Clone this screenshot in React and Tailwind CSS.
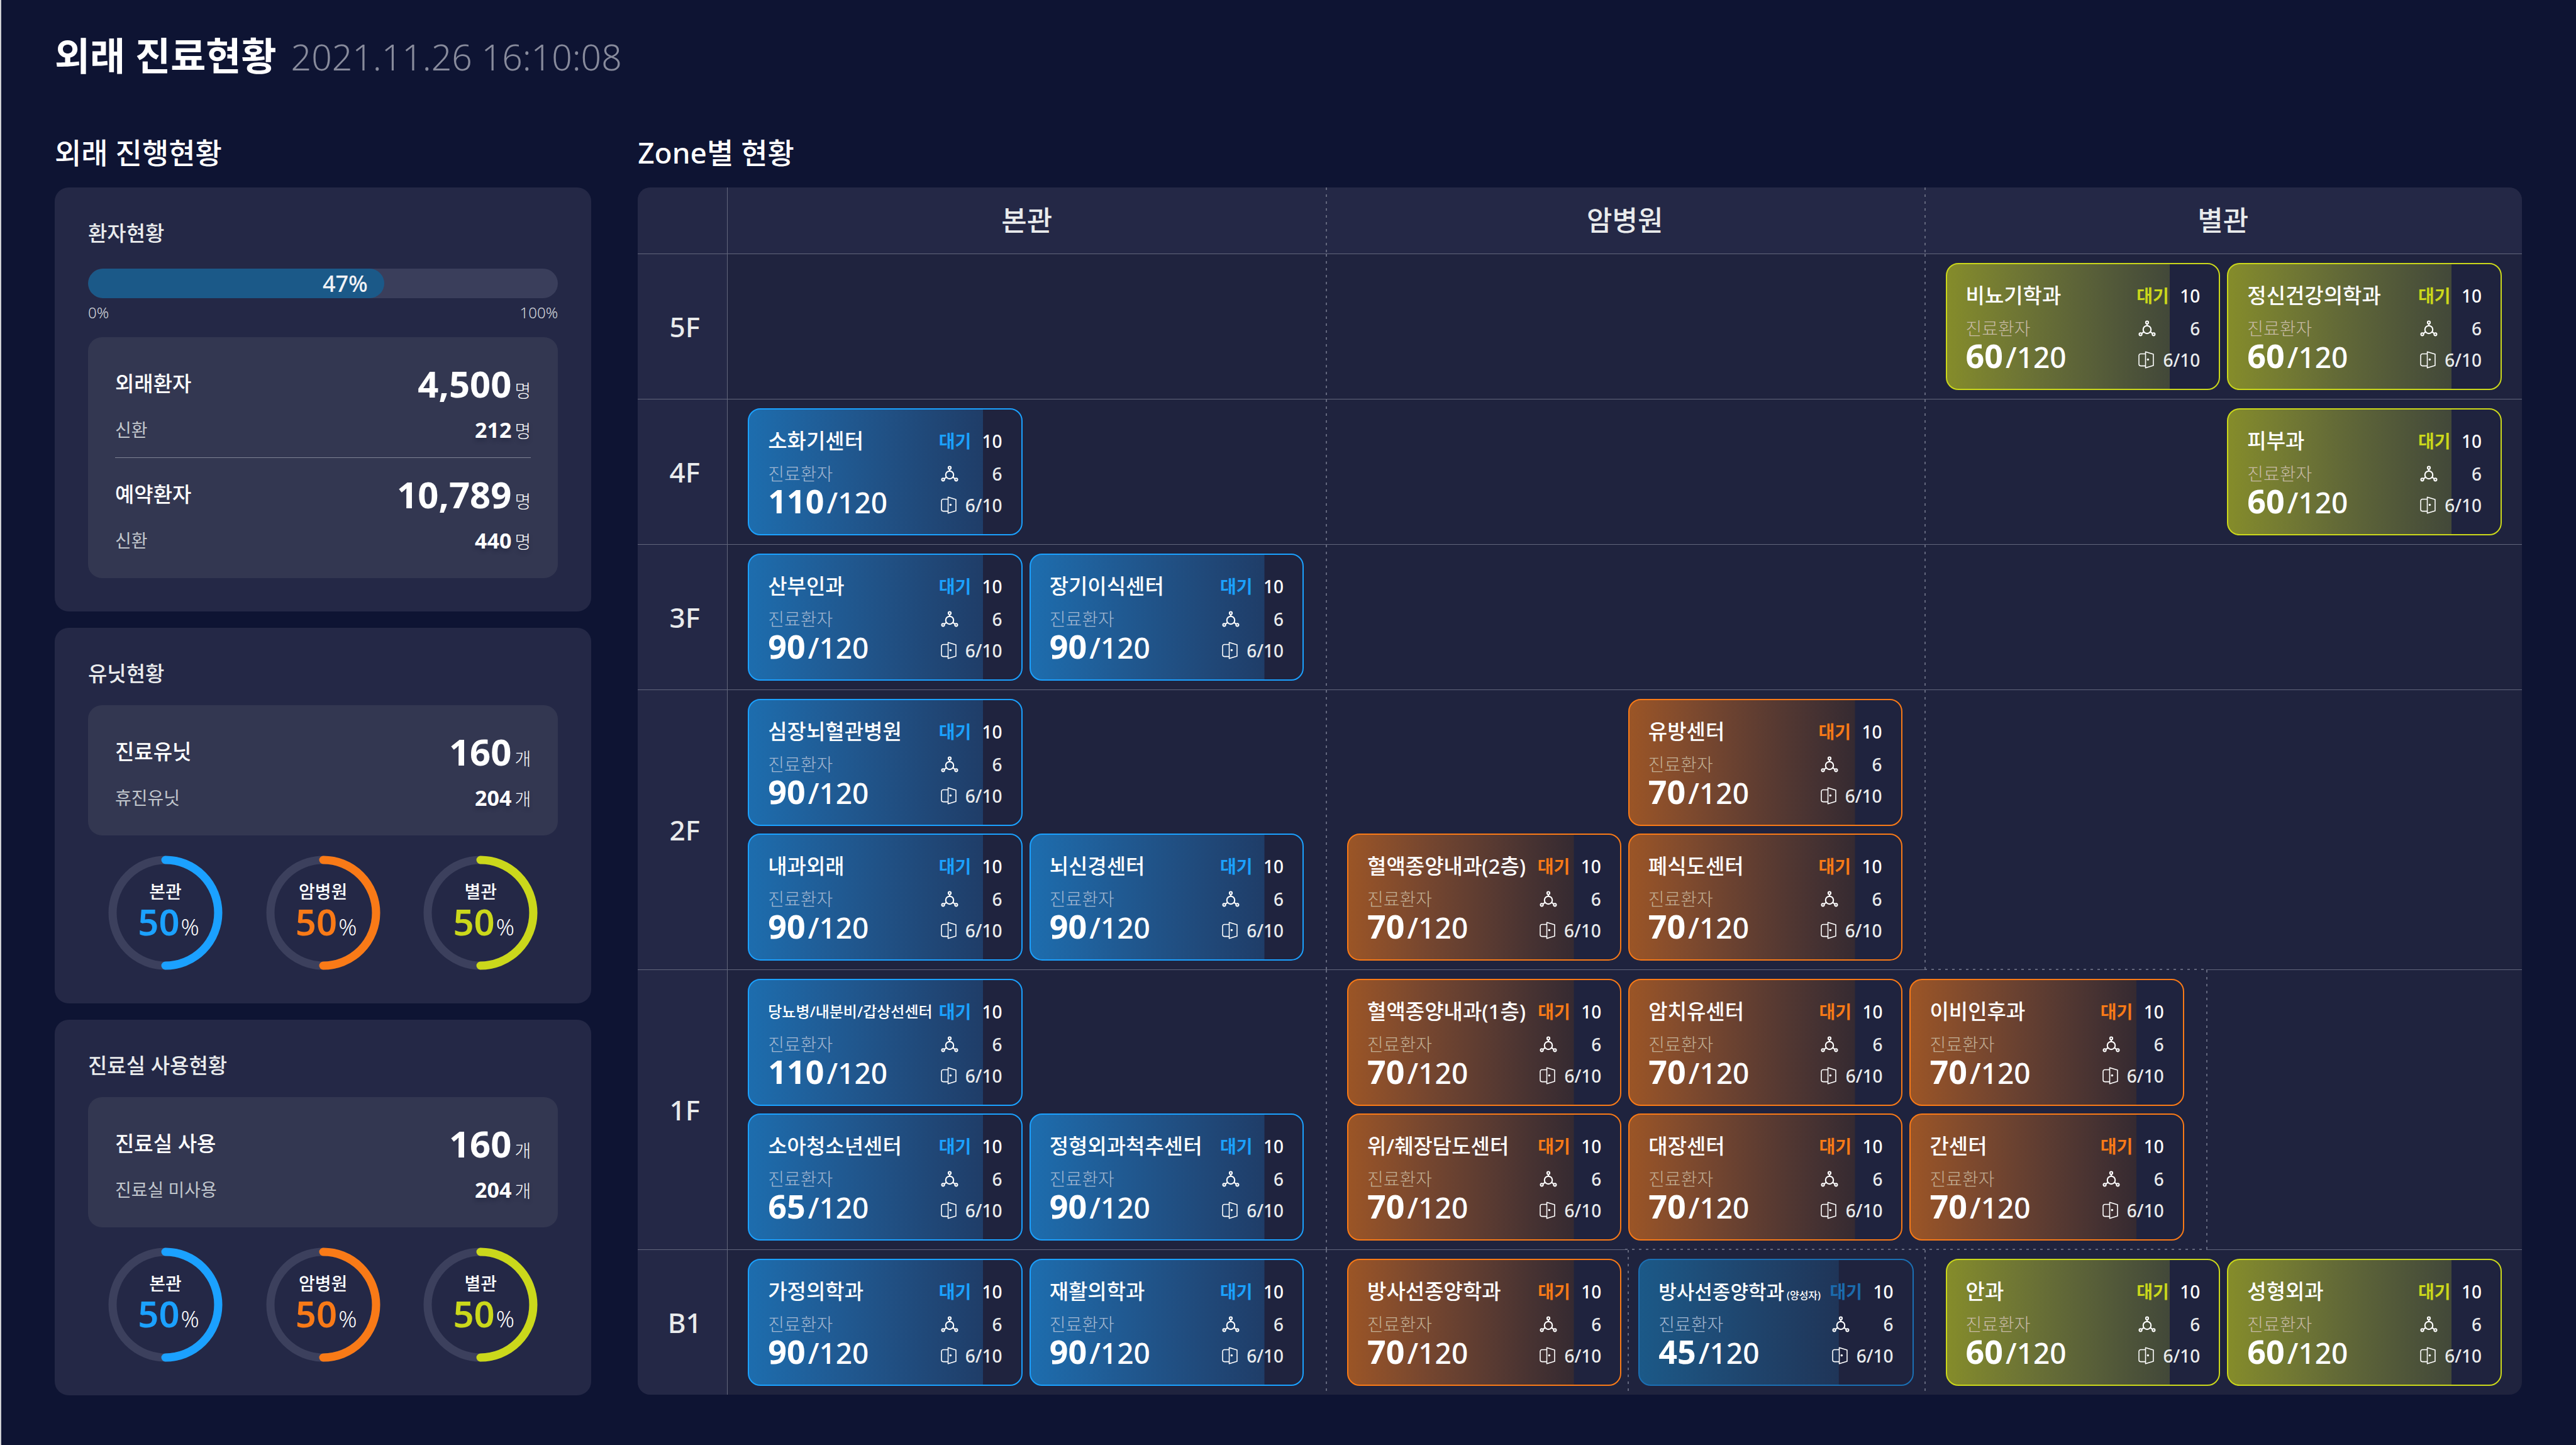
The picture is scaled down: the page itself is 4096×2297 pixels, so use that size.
const font = 'font-["Noto_Sans","Noto_Sans_CJK_KR",sans-serif]';

const dashLeft =
  '[background:repeating-linear-gradient(to_bottom,#62667c_0_4px,transparent_4px_11px)_left_top/2px_100%_no-repeat]';

const dashLeftAndBottom =
  '[background:repeating-linear-gradient(to_bottom,#62667c_0_4px,transparent_4px_11px)_left_top/2px_100%_no-repeat,repeating-linear-gradient(to_right,#62667c_0_4px,transparent_4px_11px)_left_bottom/100%_2px_no-repeat]';

/* Cancer-center block on 1F: the first third keeps a solid floor line, the rest is dashed. */
const dashCancer1F =
  '[background:repeating-linear-gradient(to_bottom,#62667c_0_4px,transparent_4px_11px)_left_top/2px_100%_no-repeat,linear-gradient(#62667c,#62667c)_left_bottom/34%_1px_no-repeat,repeating-linear-gradient(to_right,#62667c_0_4px,transparent_4px_11px)_right_bottom/66%_2px_no-repeat]';

const tones = {
  blue: {
    card: 'border-[#1ba1ff] from-[#1d6dae] to-[#1f3d68] bg-[length:86%_100%]',
    wait: 'text-[#1ba1ff]',
    sub: 'text-[#a5b9d3]',
  },
  dim: {
    card: 'border-[#1b6fb3] from-[#1b5988] to-[#1f3558] bg-[length:73%_100%]',
    wait: 'text-[#1b6bad]',
    sub: 'text-[#a5b9d3]',
  },
  orange: {
    card: 'border-[#f97a17] from-[#9b5526] to-[#352a31] bg-[length:83%_100%]',
    wait: 'text-[#f97a17]',
    sub: 'text-[#c4b095]',
  },
  green: {
    card: 'border-[#cbd81b] from-[#858c2a] to-[#424839] bg-[length:82%_100%]',
    wait: 'text-[#cbd81b]',
    sub: 'text-[#c8bba6]',
  },
};

function StaffIcon() {
  return (
    <svg viewBox="0 0 160 150" className="h-[26px] w-7" fill="none" stroke="#fff" strokeWidth="12" aria-label="의료진" role="img">
      <circle cx="80" cy="86" r="36" />
      <circle cx="80" cy="21" r="12" />
      <circle cx="20" cy="129" r="12" />
      <circle cx="140" cy="129" r="12" />
      <path d="M80 33V50M50 107L31 121M110 107L129 121" />
    </svg>
  );
}

function DoorIcon() {
  return (
    <svg viewBox="0 0 143 158" className="h-7 w-[25px]" fill="none" stroke="#fff" strokeWidth="9" strokeLinejoin="round" aria-label="진료실" role="img">
      <path d="M66 6L137 27V130L66 152Z" />
      <path d="M66 25H22A16 16 0 0 0 6 41V118A16 16 0 0 0 22 134H66" />
      <circle cx="88" cy="76" r="10" fill="#fff" stroke="none" />
    </svg>
  );
}

function Clinic({ tone, name, note, count, size = 'text-[33px]' }) {
  const t = tones[tone];
  return (
    <article className={`flex h-[202px] min-w-0 justify-between rounded-[20px] border-2 bg-linear-to-r bg-no-repeat px-[30px] pt-6 ${t.card}`}>
      <div className="whitespace-nowrap">
        <h3 className={`h-[52px] leading-[52px] font-medium text-white ${size}`}>
          {name}
          {note && <small className="ml-1 text-[16px] leading-none">{note}</small>}
        </h3>
        <p className={`text-[28px] leading-[52px] font-light ${t.sub}`}>진료환자</p>
        <p className="text-[46px] leading-[34px] font-medium text-white">
          <strong className="mr-1 text-[52px] font-bold">{count}</strong>
          /120
        </p>
      </div>
      <dl className="w-[101px] shrink-0 text-[28px] leading-[52px] font-medium text-[#e9ebec]">
        <div className="flex justify-between">
          <dt className={`font-bold ${t.wait}`}>대기</dt>
          <dd className="text-white">10</dd>
        </div>
        <div className="flex items-center justify-between">
          <dt className="pl-[3px]"><StaffIcon /></dt>
          <dd>6</dd>
        </div>
        <div className="flex items-center justify-between leading-[48px]">
          <dt className="pl-[3px]"><DoorIcon /></dt>
          <dd>6/10</dd>
        </div>
      </dl>
    </article>
  );
}

function Cards({ tone, items, cols = 'grid-cols-2' }) {
  return (
    <div className={`grid gap-x-[11px] gap-y-3 ${cols}`}>
      {items.map((it, i) => (it ? <Clinic key={i} tone={tone} name={it[0]} count={it[1]} size={it[2]} /> : <span key={i} />))}
    </div>
  );
}

const main = 'pt-[14px] pb-[14px] pl-8 pr-[35px] align-top';
const cancer = 'pt-[14px] pb-[14px] pl-[34px] pr-[35px] align-top';
const annex = 'pt-[14px] pb-[14px] pl-[34px] pr-8 align-top';
const line = 'border-b border-[#62667c]';

function FloorLabel({ children, last }) {
  return (
    <th scope="row" className={`border-r border-[#62667c] bg-[#242846] pl-[7px] text-[44px] font-medium text-[#e9ebec] ${last ? '' : 'border-b'}`}>
      {children}
    </th>
  );
}

function ZoneTable() {
  return (
    <div className="overflow-hidden rounded-[20px] bg-[#1f233e]">
      <table className="w-full table-fixed border-separate border-spacing-0">
        <colgroup>
          <col className="w-[143px]" />
          <col className="w-[31.74%]" />
          <col className="w-[16.03%]" />
          <col className="w-[15.73%]" />
          <col className="w-[14.96%]" />
          <col />
        </colgroup>
        <thead className="bg-[#242846] text-[44px] leading-[105px] text-[#e9ebec]">
          <tr>
            <td className="border-r border-b border-[#62667c]" />
            <th scope="col" className={`font-medium ${line}`}>본관</th>
            <th scope="col" colSpan={2} className={`font-medium ${line} ${dashLeft}`}>암병원</th>
            <th scope="col" colSpan={2} className={`font-medium ${line} ${dashLeft}`}>별관</th>
          </tr>
        </thead>
        <tbody>
          <tr>
            <FloorLabel>5F</FloorLabel>
            <td className={line} />
            <td colSpan={2} className={`${line} ${dashLeft}`} />
            <td colSpan={2} className={`${annex} ${line} ${dashLeft}`}>
              <Cards tone="green" items={[['비뇨기학과', 60], ['정신건강의학과', 60]]} />
            </td>
          </tr>
          <tr>
            <FloorLabel>4F</FloorLabel>
            <td className={`${main} ${line}`}>
              <Cards tone="blue" items={[['소화기센터', 110]]} />
            </td>
            <td colSpan={2} className={`${line} ${dashLeft}`} />
            <td colSpan={2} className={`${annex} ${line} ${dashLeft}`}>
              <Cards tone="green" items={[null, ['피부과', 60]]} />
            </td>
          </tr>
          <tr>
            <FloorLabel>3F</FloorLabel>
            <td className={`${main} ${line}`}>
              <Cards tone="blue" items={[['산부인과', 90], ['장기이식센터', 90]]} />
            </td>
            <td colSpan={2} className={`${line} ${dashLeft}`} />
            <td colSpan={2} className={`${line} ${dashLeft}`} />
          </tr>
          <tr>
            <FloorLabel>2F</FloorLabel>
            <td className={`${main} ${line}`}>
              <Cards tone="blue" items={[['심장뇌혈관병원', 90], null, ['내과외래', 90], ['뇌신경센터', 90]]} />
            </td>
            <td colSpan={2} className={`${cancer} ${line} ${dashLeft}`}>
              <Cards tone="orange" items={[null, ['유방센터', 70], ['혈액종양내과(2층)', 70], ['폐식도센터', 70]]} />
            </td>
            <td className={dashLeftAndBottom} />
            <td className={line} />
          </tr>
          <tr>
            <FloorLabel>1F</FloorLabel>
            <td className={`${main} ${line}`}>
              <Cards
                tone="blue"
                items={[['당뇨병/내분비/갑상선센터', 110, 'text-[24px]'], null, ['소아청소년센터', 65], ['정형외과척추센터', 90]]}
              />
            </td>
            <td colSpan={3} className={`${cancer} ${dashCancer1F}`}>
              <Cards
                tone="orange"
                cols="grid-cols-3"
                items={[
                  ['혈액종양내과(1층)', 70],
                  ['암치유센터', 70],
                  ['이비인후과', 70],
                  ['위/췌장담도센터', 70],
                  ['대장센터', 70],
                  ['간센터', 70],
                ]}
              />
            </td>
            <td className={`${line} ${dashLeft}`} />
          </tr>
          <tr>
            <FloorLabel last>B1</FloorLabel>
            <td className={main}>
              <Cards tone="blue" items={[['가정의학과', 90], ['재활의학과', 90]]} />
            </td>
            <td className={`pt-[14px] pr-[10px] pb-[14px] pl-[34px] align-top ${dashLeft}`}>
              <Clinic tone="orange" name="방사선종양학과" count={70} />
            </td>
            <td className={`px-[17px] pt-[14px] pb-[14px] align-top ${dashLeft}`}>
              <Clinic tone="dim" name="방사선종양학과" note="(양성자)" count={45} size="text-[31px]" />
            </td>
            <td colSpan={2} className={`${annex} ${dashLeft}`}>
              <Cards tone="green" items={[['안과', 60], ['성형외과', 60]]} />
            </td>
          </tr>
        </tbody>
      </table>
    </div>
  );
}

function Stat({ label, value, sub, subValue, unit }) {
  return (
    <dl className="text-white">
      <div className="flex items-center justify-between">
        <dt className="text-[33px] font-medium">{label}</dt>
        <dd className="text-[58px] leading-[64px] font-bold">
          {value}
          <span className="ml-[5px] text-[28px] leading-none font-light">{unit}</span>
        </dd>
      </div>
      <div className="mt-[19px] flex items-center justify-between">
        <dt className="text-[28px] text-[#c1c6cc]">{sub}</dt>
        <dd className="text-[34px] leading-[44px] font-bold [text-shadow:0_4px_6px_rgba(20,24,50,0.4)]">
          {subValue}
          <span className="ml-[5px] text-[28px] leading-none font-light">{unit}</span>
        </dd>
      </div>
    </dl>
  );
}

function Ring({ name, stroke, text }) {
  return (
    <div className="relative size-[182px]">
      <svg viewBox="0 0 182 182" className="absolute inset-0 size-full" fill="none" strokeWidth="13" aria-hidden="true">
        <circle cx="91" cy="91" r="84" stroke="#3c405d" />
        <path d="M91 7A84 84 0 0 1 91 175" stroke={stroke} strokeLinecap="round" />
      </svg>
      <div className="relative flex flex-col items-center pt-[39px] text-white">
        <span className="text-[28px] leading-9 font-medium">{name}</span>
        <span className="pl-2.5 text-[58px] leading-[60px]">
          <strong className={`font-semibold ${text}`}>50</strong>
          <span className="ml-0.5 text-[36px] leading-none font-light">%</span>
        </span>
      </div>
    </div>
  );
}

function Rings() {
  return (
    <div className="mt-8 flex justify-between px-8">
      <Ring name="본관" stroke="#1ba1ff" text="text-[#1ba1ff]" />
      <Ring name="암병원" stroke="#f97a17" text="text-[#f97a17]" />
      <Ring name="별관" stroke="#cbd81b" text="text-[#cbd81b]" />
    </div>
  );
}

function Panel({ title, children }) {
  return (
    <section className="rounded-[22px] bg-[#242846] px-[53px] pt-[50px] pb-[53px]">
      <h3 className="text-[33px] leading-[46px] font-medium text-[#e9ebec]">{title}</h3>
      {children}
    </section>
  );
}

const box = 'rounded-[22px] bg-[#333751] px-[43px] pt-[42px] pb-[38px]';

export default function App() {
  return (
    <div className={`min-h-screen border-l-2 border-[#cfd0d4] bg-[#0e1433] pt-[47px] pr-[86px] pb-[78px] pl-[85px] ${font}`}>
      <header className="flex items-baseline gap-[23px] leading-[84px]">
        <h1 className="text-[61px] font-bold text-white">외래 진료현황</h1>
        <time className="text-[57px] font-light text-[#888b9c]">2021.11.26 16:10:08</time>
      </header>

      <main className="mt-[78px] grid grid-cols-[853fr_2995fr] gap-x-[74px]">
        <section className="min-w-0">
          <h2 className="mb-6 text-[46px] leading-[64px] font-medium text-white">외래 진행현황</h2>
          <div className="flex flex-col gap-[26px]">
            <Panel title="환자현황">
              <div
                className="mt-[33px] h-[47px] overflow-hidden rounded-full bg-[#3a3e5b]"
                role="progressbar"
                aria-label="환자현황"
                aria-valuenow={47}
              >
                <div className="h-full w-[63%] rounded-full bg-[#1b5988] pr-[26px] text-right text-[36px] leading-[47px] font-medium text-[#f0f2f5]">
                  47%
                </div>
              </div>
              <div className="mt-[7px] flex justify-between text-[24px] leading-8 font-light text-[#d5d8de]">
                <span>0%</span>
                <span>100%</span>
              </div>
              <div className={`mt-[23px] ${box}`}>
                <Stat label="외래환자" value="4,500" sub="신환" subValue="212" unit="명" />
                <hr className="mt-[22px] mb-[26px] border-[#7f8394]" />
                <Stat label="예약환자" value="10,789" sub="신환" subValue="440" unit="명" />
              </div>
            </Panel>

            <Panel title="유닛현황">
              <div className={`mt-[27px] ${box}`}>
                <Stat label="진료유닛" value="160" sub="휴진유닛" subValue="204" unit="개" />
              </div>
              <Rings />
            </Panel>

            <Panel title="진료실 사용현황">
              <div className={`mt-[27px] ${box}`}>
                <Stat label="진료실 사용" value="160" sub="진료실 미사용" subValue="204" unit="개" />
              </div>
              <Rings />
            </Panel>
          </div>
        </section>

        <section className="min-w-0">
          <h2 className="mb-6 text-[46px] leading-[64px] font-medium text-white">Zone별 현황</h2>
          <ZoneTable />
        </section>
      </main>
    </div>
  );
}
